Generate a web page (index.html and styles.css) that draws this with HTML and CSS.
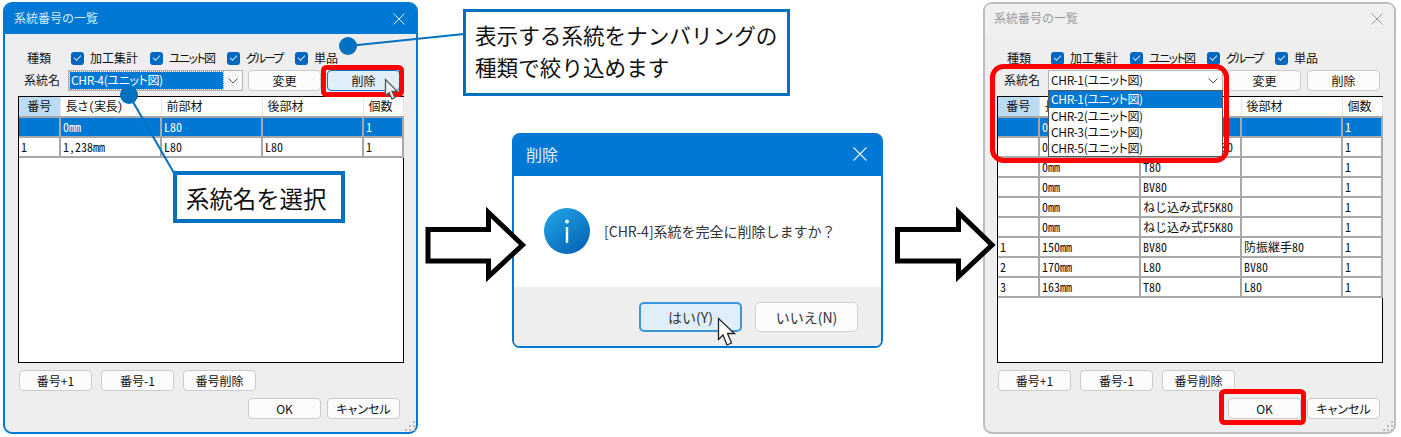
FILE: index.html
```html
<!DOCTYPE html>
<html lang="ja">
<head>
  <meta charset="UTF-8">
  <title>系統番号の削除</title>
  <link rel="stylesheet" href="styles.css">
</head>
<body>
  <div class="stage">

    <!-- left window -->
    <div class="win win-front">
      <div class="titlebar">
        <span>系統番号の一覧</span>
        <svg class="close" viewBox="0 0 12 12"><path d="M0.5 0.5 11.5 11.5M11.5 0.5 0.5 11.5"/></svg>
      </div>
      <div class="win-body">
        <div class="types">
          <span class="types-label">種類</span>
          <label class="chk"><i class="box"></i>加工集計</label>
          <label class="chk chk-unit"><i class="box"></i>ユニット図</label>
          <label class="chk chk-group"><i class="box"></i>グループ</label>
          <label class="chk"><i class="box"></i>単品</label>
        </div>
        <div class="name-row">
          <span class="name-label">系統名</span>
          <div class="combo combo-focus">
            <span class="combo-value">CHR-4(ユニット図)</span>
            <svg class="chev" viewBox="0 0 10 6"><path d="M0.5 0.5 5 5 9.5 0.5"/></svg>
          </div>
          <button class="btn">変更</button>
          <button class="btn btn-hot">削除</button>
        </div>
        <div class="list">
          <table class="grid">
            <colgroup><col class="c1"><col class="c2"><col class="c3"><col class="c4"><col class="c5"></colgroup>
            <tr class="head"><th class="head-on">番号</th><th>長さ(実長)</th><th>前部材</th><th>後部材</th><th>個数</th></tr>
            <tr class="sel"><td></td><td>0mm</td><td>L80</td><td></td><td>1</td></tr>
            <tr><td>1</td><td>1,238mm</td><td>L80</td><td>L80</td><td>1</td></tr>
          </table>
        </div>
        <div class="btn-row">
          <button class="btn">番号+1</button>
          <button class="btn">番号-1</button>
          <button class="btn">番号削除</button>
        </div>
        <div class="ok-row">
          <button class="btn">OK</button>
          <button class="btn">キャンセル</button>
        </div>
      </div>
      <svg class="grip" viewBox="0 0 10 10"><path d="M8 0h2v2H8zM4 4h2v2H4zM8 4h2v2H8zM0 8h2v2H0zM4 8h2v2H4zM8 8h2v2H8z"/></svg>
    </div>

    <!-- confirm dialog -->
    <div class="dialog">
      <div class="dialog-title">
        <span>削除</span>
        <svg class="dialog-close" viewBox="0 0 14 14"><path d="M0.5 0.5 13.5 13.5M13.5 0.5 0.5 13.5"/></svg>
      </div>
      <div class="dialog-main">
        <svg class="info" viewBox="0 0 46 46">
          <defs>
            <linearGradient id="infoFill" x1="0.15" y1="0.1" x2="0.8" y2="0.95">
              <stop offset="0" stop-color="#1f9fe3"/>
              <stop offset="1" stop-color="#0565b5"/>
            </linearGradient>
          </defs>
          <circle cx="23" cy="23" r="23" fill="url(#infoFill)"/>
          <circle cx="23" cy="13.5" r="2" fill="#fff"/>
          <rect x="21.8" y="19" width="2.4" height="16" fill="#fff"/>
        </svg>
        <span class="dialog-msg">[CHR-4]系統を完全に削除しますか？</span>
      </div>
      <div class="dialog-foot">
        <button class="dlg-btn dlg-btn-hot">はい(Y)</button>
        <button class="dlg-btn">いいえ(N)</button>
      </div>
    </div>

    <!-- right window -->
    <div class="win win-back">
      <div class="titlebar">
        <span>系統番号の一覧</span>
        <svg class="close" viewBox="0 0 12 12"><path d="M0.5 0.5 11.5 11.5M11.5 0.5 0.5 11.5"/></svg>
      </div>
      <div class="win-body">
        <div class="types">
          <span class="types-label">種類</span>
          <label class="chk"><i class="box"></i>加工集計</label>
          <label class="chk chk-unit"><i class="box"></i>ユニット図</label>
          <label class="chk chk-group"><i class="box"></i>グループ</label>
          <label class="chk"><i class="box"></i>単品</label>
        </div>
        <div class="name-row">
          <span class="name-label">系統名</span>
          <div class="combo">
            <span class="combo-value">CHR-1(ユニット図)</span>
            <svg class="chev" viewBox="0 0 10 6"><path d="M0.5 0.5 5 5 9.5 0.5"/></svg>
          </div>
          <button class="btn">変更</button>
          <button class="btn">削除</button>
        </div>
        <div class="list">
          <table class="grid">
            <colgroup><col class="c1"><col class="c2"><col class="c3"><col class="c4"><col class="c5"></colgroup>
            <tr class="head"><th class="head-on">番号</th><th>長さ(実長)</th><th>前部材</th><th>後部材</th><th>個数</th></tr>
            <tr class="sel"><td></td><td>0mm</td><td>L80</td><td></td><td>1</td></tr>
            <tr><td></td><td>0mm</td><td>ねじ込み式F5K80</td><td></td><td>1</td></tr>
            <tr><td></td><td>0mm</td><td>T80</td><td></td><td>1</td></tr>
            <tr><td></td><td>0mm</td><td>BV80</td><td></td><td>1</td></tr>
            <tr><td></td><td>0mm</td><td>ねじ込み式F5K80</td><td></td><td>1</td></tr>
            <tr><td></td><td>0mm</td><td>ねじ込み式F5K80</td><td></td><td>1</td></tr>
            <tr><td>1</td><td>150mm</td><td>BV80</td><td>防振継手80</td><td>1</td></tr>
            <tr><td>2</td><td>170mm</td><td>L80</td><td>BV80</td><td>1</td></tr>
            <tr><td>3</td><td>163mm</td><td>T80</td><td>L80</td><td>1</td></tr>
          </table>
        </div>
        <div class="btn-row">
          <button class="btn">番号+1</button>
          <button class="btn">番号-1</button>
          <button class="btn">番号削除</button>
        </div>
        <div class="ok-row">
          <button class="btn">OK</button>
          <button class="btn">キャンセル</button>
        </div>
      </div>
      <ul class="drop">
        <li class="drop-on">CHR-1(ユニット図)</li>
        <li>CHR-2(ユニット図)</li>
        <li>CHR-3(ユニット図)</li>
        <li>CHR-5(ユニット図)</li>
      </ul>
      <svg class="grip" viewBox="0 0 10 10"><path d="M8 0h2v2H8zM4 4h2v2H4zM8 4h2v2H8zM0 8h2v2H0zM4 8h2v2H4zM8 8h2v2H8z"/></svg>
    </div>

    <!-- annotations drawn over the windows -->
    <svg class="marks" viewBox="0 0 1401 437">
      <path class="leader" d="M348 46 464 34"/>
      <circle class="leader-dot" cx="348" cy="46" r="9"/>
      <path class="leader" d="M129 95 174 173"/>
      <circle class="leader-dot" cx="129" cy="95" r="9"/>
      <rect class="red" x="323.500" y="67.500" width="78" height="27" rx="3"/>
      <rect class="red" x="992.500" y="66.500" width="234" height="94" rx="11"/>
      <rect class="red" x="1221.500" y="391.500" width="82" height="31" rx="3"/>
      <path class="arrow" d="M428 229.500H488.500V212.500L522.500 245 488.500 276.500V261H428Z"/>
      <path class="arrow" d="M897.500 229.500H958.500V212.500L992 245 958.500 276.500V261H897.500Z"/>
      <path class="cursor cursor-sm" d="M385.500 79.500V96L389 92.500 392 99 395 97.500 392 91.500H397.500Z"/>
      <path class="cursor" d="M718.500 318.500V339.500L723 335 727 345 731.500 343 727.500 333.500H734.500Z"/>
    </svg>

    <div class="callout callout-top">表示する系統をナンバリングの<br>種類で絞り込めます</div>
    <div class="callout callout-name">系統名を選択</div>
  </div>
</body>
</html>
```

FILE: styles.css
```css
html, body {
  margin: 0;
  padding: 0;
  background: #fff;
  overflow: hidden;
}
.stage {
  position: relative;
  width: 1401px;
  height: 437px;
  font-family: "Noto Sans CJK JP", sans-serif;
  font-size: 12px;
  color: #111;
}

/* windows */
.win {
  position: absolute;
  top: 2px;
  height: 432px;
  box-sizing: border-box;
  background: #eee;
  border: 2px solid #0078d4;
  border-radius: 9px;
  display: flex;
  flex-direction: column;
}
.win-front {
  left: 3px;
  width: 415px;
}
.win-back {
  left: 983px;
  width: 413px;
  border-color: #bdbdbd;
}
.titlebar {
  height: 30px;
  box-sizing: border-box;
  flex: none;
  display: flex;
  align-items: center;
  justify-content: space-between;
  padding: 0 11px 3px 9px;
  background: #0078d4;
  color: #d8ebfa;
  border-radius: 6px 6px 0 0;
}
.close {
  width: 12px;
  height: 12px;
  margin-top: 3px;
  fill: none;
  stroke: #d8ebfa;
}
.win-back .titlebar {
  background: #f0f0f0;
  color: #9a9a9a;
}
.win-back .close {
  stroke: #9a9a9a;
}
.win-body {
  flex: 1;
  padding: 18px 0 0 13px;
  font-feature-settings: "palt";
}
.win-back .win-body {
  padding-left: 12px;
}
.types {
  display: grid;
  grid-template-columns: 44px 79px 77px 68px auto;
  align-items: start;
  height: 14px;
  margin-left: 9px;
  line-height: 12px;
}
.win-back .types {
  margin-left: 10px;
}
.chk {
  display: flex;
  align-items: flex-start;
  gap: 6px;
}
.chk-unit {
  letter-spacing: -1.6px;
}
.chk-group {
  letter-spacing: -2px;
}
.box {
  position: relative;
  flex: none;
  width: 13px;
  height: 13px;
  background: #0067c0;
  border-radius: 3px;
}
.box::after {
  content: "";
  position: absolute;
  left: 3px;
  top: 3px;
  width: 6px;
  height: 3px;
  border-left: 1px solid #cfe4f7;
  border-bottom: 1px solid #cfe4f7;
  transform: rotate(-45deg);
}
.name-row {
  display: flex;
  align-items: center;
  height: 21px;
  margin-top: 4px;
}
.name-label {
  width: 44px;
  margin-left: 6px;
  padding-bottom: 2px;
}
.win-back .name-label {
  margin-left: 7px;
}
.combo {
  display: flex;
  align-items: center;
  box-sizing: border-box;
  width: 175px;
  height: 21px;
  margin-right: 5px;
  padding: 1px;
  background: #fff;
  border: 1px solid #b4b4b4;
}
.combo-value {
  flex: 1;
  height: 100%;
  line-height: 16px;
  padding-left: 1px;
  box-sizing: border-box;
  letter-spacing: -0.35px;
}
.combo-focus {
  background: #f7f7f7;
}
.combo-focus .combo-value {
  background: #0078d4;
  color: #fff;
  outline: 1px dotted #e08a1e;
}
.chev {
  width: 10px;
  height: 6px;
  margin: 0 3px 0 5px;
  fill: none;
  stroke: #555;
}
.btn {
  box-sizing: border-box;
  width: 73px;
  height: 21px;
  padding: 0 0 1px;
  margin-right: 6px;
  font: inherit;
  font-feature-settings: inherit;
  color: #111;
  background: #fcfcfc;
  border: 1px solid #cbcbcb;
  border-radius: 4px;
}
.btn-hot {
  background: #e0eef9;
  border-color: #0078d4;
}

/* list */
.list {
  box-sizing: border-box;
  width: 386px;
  height: 267px;
  margin-top: 5px;
  background: #fff;
  border: 1px solid #000;
}
.grid {
  width: 384px;
  table-layout: fixed;
  border-collapse: collapse;
  font-feature-settings: "hwid";
}
.c1 { width: 41px; }
.c2, .c3, .c4 { width: 101px; }
.c5 { width: 40px; }
.grid th {
  height: 19px;
  padding: 0 0 2px 5px;
  box-sizing: border-box;
  font-weight: 400;
  text-align: left;
  white-space: nowrap;
  border-right: 1px solid #e4e4e4;
  border-bottom: 2px solid #a8a8a8;
}
.grid th:nth-child(2) {
  letter-spacing: -0.5px;
}
.grid th.head-on {
  background: #bcdcf4;
  text-align: center;
  padding: 0 0 2px;
}
.grid td {
  height: 18px;
  padding: 0 0 0 2px;
  line-height: 18px;
  white-space: nowrap;
  overflow: visible;
  border-right: 2px solid #a8a8a8;
  border-bottom: 2px solid #a8a8a8;
}
.grid .sel td {
  background: #0078d4;
  color: #fff;
}
.btn-row {
  display: flex;
  gap: 9px;
  margin: 7px 0 0 1px;
}
.btn-row .btn {
  margin: 0;
}
.ok-row {
  display: flex;
  margin: 7px 0 0 230px;
}
.win-back .ok-row {
  margin-left: 231px;
}
.grip {
  position: absolute;
  right: 1px;
  bottom: 1px;
  width: 10px;
  height: 10px;
  fill: #bdbdbd;
}

/* open combo list */
.drop {
  position: absolute;
  left: 63px;
  top: 86px;
  box-sizing: border-box;
  width: 175px;
  height: 67px;
  margin: 0;
  padding: 0;
  list-style: none;
  background: #fff;
  border: 1px solid #555;
  font-feature-settings: "palt";
  letter-spacing: -0.35px;
}
.drop li {
  height: 16px;
  line-height: 15px;
  padding-left: 2px;
}
.drop .drop-on {
  height: 17px;
  line-height: 16px;
  background: #0078d4;
  color: #fff;
}

/* confirm dialog */
.dialog {
  position: absolute;
  left: 512px;
  top: 133px;
  width: 371px;
  height: 215px;
  box-sizing: border-box;
  border: 2px solid #0078d4;
  border-radius: 8px;
  display: flex;
  flex-direction: column;
  background: #fff;
  color: #333;
}
.dialog-title {
  flex: none;
  height: 41px;
  box-sizing: border-box;
  display: flex;
  align-items: center;
  justify-content: space-between;
  padding: 0 14px 4px 12px;
  background: #0078d4;
  color: #e4f1fb;
  font-size: 16px;
  border-radius: 5px 5px 0 0;
}
.dialog-close {
  width: 14px;
  height: 14px;
  margin-top: 1px;
  fill: none;
  stroke: #e4f1fb;
  stroke-width: 1.2;
}
.dialog-main {
  flex: 1;
  display: flex;
  align-items: center;
  gap: 14px;
  padding: 0 0 2px 30px;
}
.info {
  width: 46px;
  height: 46px;
}
.dialog-msg {
  font-size: 14px;
  margin-top: 1px;
}
.dialog-foot {
  flex: none;
  height: 59px;
  box-sizing: border-box;
  display: flex;
  justify-content: flex-end;
  gap: 13px;
  padding: 15px 23px 0 0;
  background: #eee;
  border-radius: 0 0 5px 5px;
}
.dlg-btn {
  width: 103px;
  height: 30px;
  padding: 0;
  box-sizing: border-box;
  font: inherit;
  font-size: 14px;
  color: #333;
  background: #fbfbfb;
  border: 1px solid #d2d2d2;
  border-radius: 5px;
}
.dlg-btn-hot {
  background: #e0eef9;
  border: 2px solid #3a96dd;
}

/* annotations */
.marks {
  position: absolute;
  left: 0;
  top: 0;
  width: 1401px;
  height: 437px;
}
.leader {
  fill: none;
  stroke: #0070c0;
  stroke-width: 2;
}
.leader-dot {
  fill: #0070c0;
}
.red {
  fill: none;
  stroke: #ff0000;
  stroke-width: 5;
}
.arrow {
  fill: #fff;
  stroke: #000;
  stroke-width: 5;
}
.cursor {
  fill: #fff;
  stroke: #222;
  stroke-width: 1.3;
}
.cursor-sm {
  fill: #f2f2f2;
  stroke: #555;
}
.callout {
  position: absolute;
  box-sizing: border-box;
  background: #fff;
  color: #111;
}
.callout-top {
  left: 463px;
  top: 9px;
  width: 327px;
  height: 87px;
  padding: 7px 0 0 9px;
  border: 3px solid #0070c0;
  font-size: 21.6px;
  line-height: 32px;
  white-space: nowrap;
}
.callout-name {
  left: 173px;
  top: 171px;
  width: 172px;
  height: 52px;
  padding-left: 9px;
  border: 4px solid #0070c0;
  font-size: 23.4px;
  line-height: 46px;
  white-space: nowrap;
}
```
